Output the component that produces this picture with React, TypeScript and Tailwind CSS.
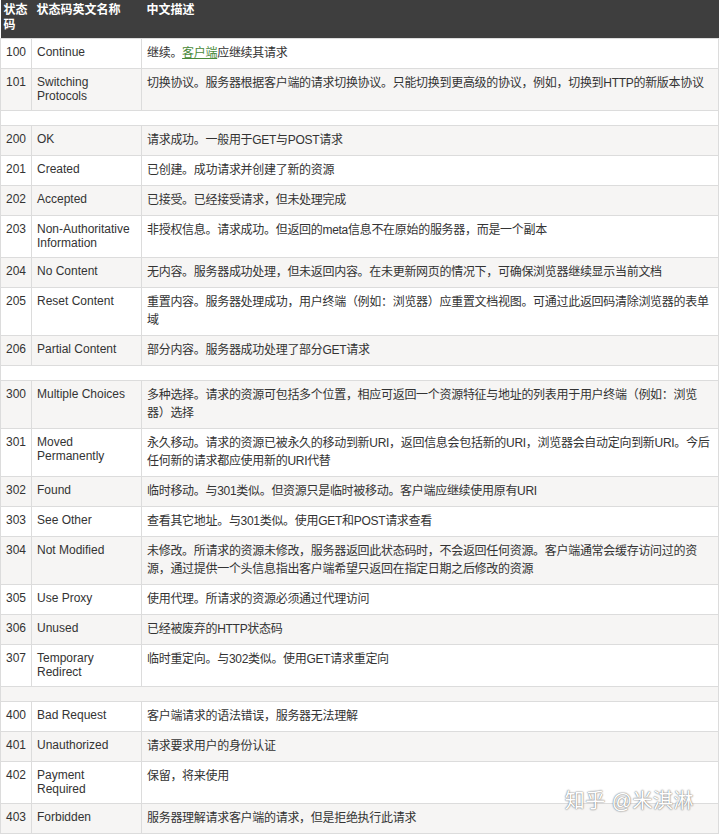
const rows: ([string, string, React.ReactNode] | null)[] = [
  ["100", "Continue", <>继续。<span className="text-[#4a8a3a] underline">客户端</span>应继续其请求</>],
  ["101", "Switching Protocols", "切换协议。服务器根据客户端的请求切换协议。只能切换到更高级的协议，例如，切换到HTTP的新版本协议"],
  null,
  ["200", "OK", "请求成功。一般用于GET与POST请求"],
  ["201", "Created", "已创建。成功请求并创建了新的资源"],
  ["202", "Accepted", "已接受。已经接受请求，但未处理完成"],
  ["203", "Non-Authoritative Information", "非授权信息。请求成功。但返回的meta信息不在原始的服务器，而是一个副本"],
  ["204", "No Content", "无内容。服务器成功处理，但未返回内容。在未更新网页的情况下，可确保浏览器继续显示当前文档"],
  ["205", "Reset Content", "重置内容。服务器处理成功，用户终端（例如：浏览器）应重置文档视图。可通过此返回码清除浏览器的表单域"],
  ["206", "Partial Content", "部分内容。服务器成功处理了部分GET请求"],
  null,
  ["300", "Multiple Choices", "多种选择。请求的资源可包括多个位置，相应可返回一个资源特征与地址的列表用于用户终端（例如：浏览器）选择"],
  ["301", "Moved Permanently", "永久移动。请求的资源已被永久的移动到新URI，返回信息会包括新的URI，浏览器会自动定向到新URI。今后任何新的请求都应使用新的URI代替"],
  ["302", "Found", "临时移动。与301类似。但资源只是临时被移动。客户端应继续使用原有URI"],
  ["303", "See Other", "查看其它地址。与301类似。使用GET和POST请求查看"],
  ["304", "Not Modified", "未修改。所请求的资源未修改，服务器返回此状态码时，不会返回任何资源。客户端通常会缓存访问过的资源，通过提供一个头信息指出客户端希望只返回在指定日期之后修改的资源"],
  ["305", "Use Proxy", "使用代理。所请求的资源必须通过代理访问"],
  ["306", "Unused", "已经被废弃的HTTP状态码"],
  ["307", "Temporary Redirect", "临时重定向。与302类似。使用GET请求重定向"],
  null,
  ["400", "Bad Request", "客户端请求的语法错误，服务器无法理解"],
  ["401", "Unauthorized", "请求要求用户的身份认证"],
  ["402", "Payment Required", "保留，将来使用"],
  ["403", "Forbidden", "服务器理解请求客户端的请求，但是拒绝执行此请求"],
];

export default function App() {
  return (
    <div className="relative w-[720px] h-[834px] overflow-hidden bg-white text-[12px] text-[#333]" style={{ fontFamily: '"Liberation Sans", "Noto Sans CJK SC", sans-serif' }}>
      <table className="w-[719px] border-collapse table-fixed">
        <colgroup>
          <col className="w-[31px]" />
          <col className="w-[110px]" />
          <col />
        </colgroup>
        <thead>
          <tr className="bg-[#3e3e3e] text-white font-bold align-top h-[38px]">
            <th className="text-left px-[3px] pt-[3px] leading-[15px] font-bold">状态码</th>
            <th className="text-left px-[5px] pt-[3px] leading-[15px] font-bold">状态码英文名称</th>
            <th className="text-left px-[5px] pt-[3px] leading-[15px] font-bold">中文描述</th>
          </tr>
        </thead>
        <tbody>
          {rows.map((r, i) => {
            const bg = i % 2 === 0 ? "bg-white" : "bg-[#f6f5f4]";
            if (!r)
              return (
                <tr key={i} className={bg + " h-[15px]"}>
                  <td colSpan={3} className="border border-[#dcdcdc]"></td>
                </tr>
              );
            return (
              <tr key={i} className={bg + " align-top"}>
                <td className="border border-[#dcdcdc] px-[5px] pt-[6px] pb-[7px] leading-[14px]">{r[0]}</td>
                <td className="border border-[#dcdcdc] px-[5px] pt-[6px] pb-[7px] leading-[14px]">{r[1]}</td>
                <td className="border border-[#dcdcdc] px-[5px] pt-[5px] pb-[6px] leading-[18px] tracking-[-0.3px]">{r[2]}</td>
              </tr>
            );
          })}
        </tbody>
      </table>
      <div className="absolute right-[26px] bottom-[18px] text-[20px] text-white tracking-wide" style={{ textShadow: "0 0 2px #888, 0 0 1px #666" }}>知乎 @米淇淋</div>
    </div>
  );
}
